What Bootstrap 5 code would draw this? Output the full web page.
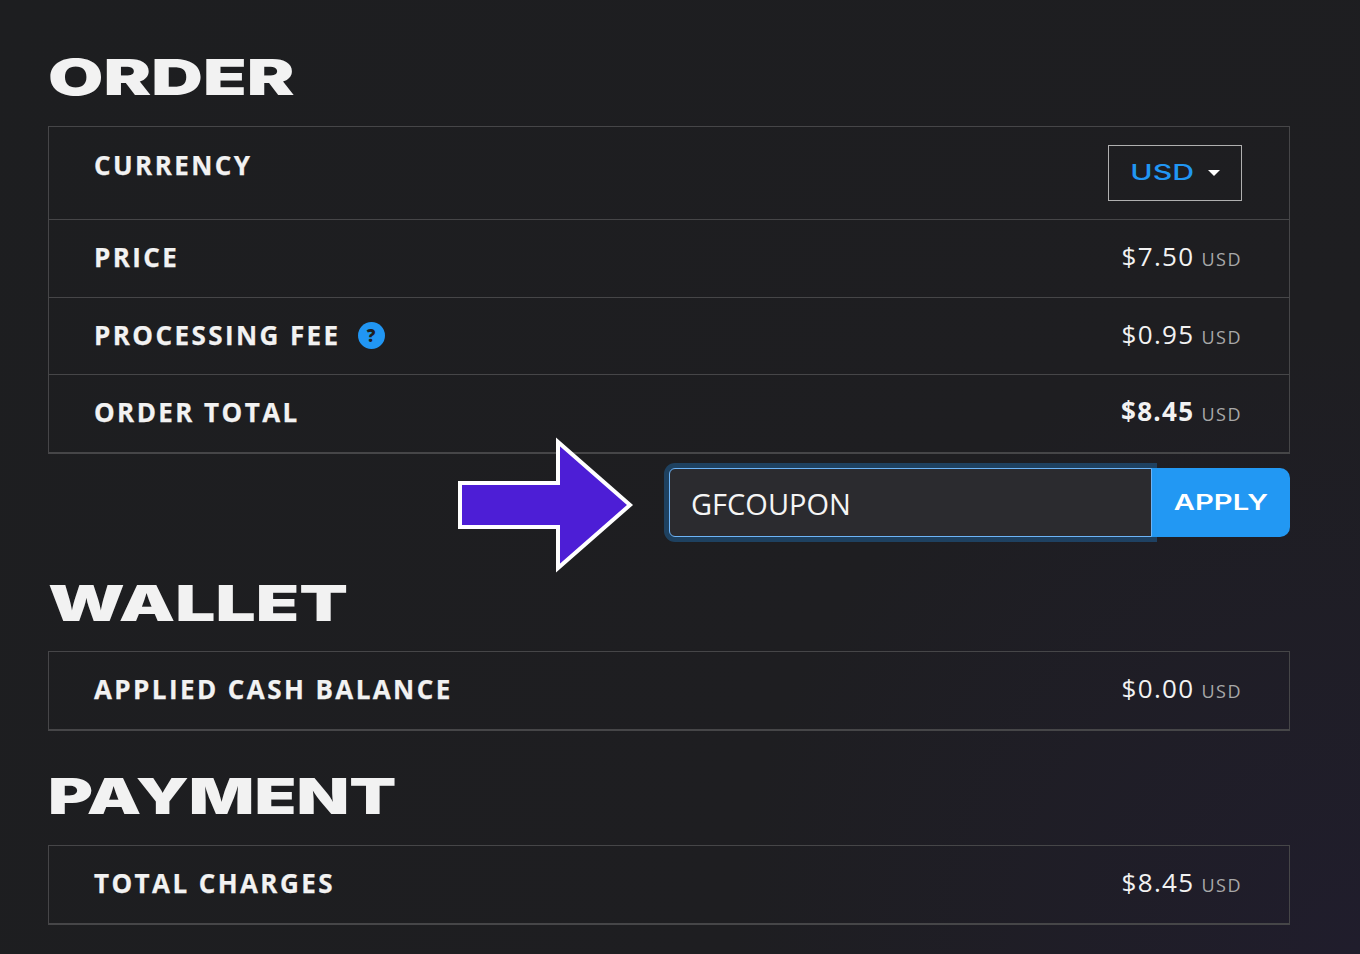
<!DOCTYPE html>
<html lang="en">
<head>
<meta charset="utf-8">
<title>Order</title>
<link href="https://cdn.jsdelivr.net/npm/bootstrap@5.3.0/dist/css/bootstrap.min.css" rel="stylesheet">
<style>
html,body{height:100%;}
body{background:radial-gradient(circle at 100% 100%,#201d2c 0,#1e1e21 38%,#1d1e20 100%);color:#f2f2f2;font-family:"Open Sans",sans-serif;overflow:hidden;}
.pagewrap{padding:0 70px 0 48px;}
.sect-title{font-family:Inter,sans-serif;font-weight:900;font-size:49px;line-height:52px;height:52px;width:fit-content;color:#f2f2f2;margin:0;transform-origin:0 50%;white-space:nowrap;}
.t-order{transform:scaleX(1.46);margin-top:52px;margin-bottom:22px;}
.t-wallet{transform:scaleX(1.45);margin-top:41px;margin-bottom:21px;}
.t-pay{transform:scaleX(1.40);margin-top:40px;margin-bottom:22px;}
.sumbox{border:1px solid #464648;border-bottom-width:2px;border-radius:0;background:transparent;}
.sumrow{background:transparent;border-color:#464648;padding:0 47px 0 45px;height:77px;color:#f2f2f2;}
.sumrow-top{height:93px;padding-top:23px;}
.sumrow-top + .sumrow{height:78px;}
.rowlabel{font-weight:700;font-size:26px;line-height:36px;letter-spacing:2.42px;-webkit-text-stroke:.25px #f2f2f2;margin-top:-3px;}
.rowval{font-size:26px;line-height:36px;letter-spacing:1.3px;color:#f2f2f2;margin-top:-2px;}
.unit{font-size:18px;letter-spacing:1.5px;color:#a8a8a8;margin-left:-1px;}
.cur-btn{width:134px;height:56px;border:1px solid #b0b0b0;border-radius:0;color:#2196f3;background:transparent;padding:0;margin-top:-5px;font-family:Inter,sans-serif;font-weight:500;font-size:21px;display:flex;align-items:center;justify-content:center;}
.cur-btn:hover{color:#2196f3;border-color:#b0b0b0;}
.cur-btn::after{color:#fff;margin-left:15px;vertical-align:middle;border-top-width:6px;border-left-width:6px;border-right-width:6px;}
.widetxt{display:inline-block;transform:scaleX(1.44);margin:0 8px 0 10px;}
.helpdot{width:27px;height:27px;border-radius:50%;background:#2196f3;color:#1e1e21;font-weight:800;font-size:17px;line-height:27px;text-align:center;margin-left:17px;margin-top:-1px;}
.couponline{position:relative;margin-top:14px;height:69px;}
.coupon-group{width:621px;height:69px;}
.coupon-input{background:#2b2b2f;color:#f5f5f5;border:1px solid #6db4f7;border-radius:6px 0 0 6px;font-size:29px;padding:2px 21px 0;box-shadow:0 0 0 5px rgba(33,150,243,.3);position:relative;z-index:5;font-family:"Open Sans",sans-serif;}
.coupon-btn{width:139px;background:#2298f3;border:0;color:#fff;border-radius:0 10px 10px 0;font-family:Inter,sans-serif;font-weight:600;font-size:21px;padding:0;}
.coupon-btn:hover{background:#2298f3;color:#fff;}
.applytxt{display:inline-block;transform:scaleX(1.39);}
.bigarrow{position:absolute;left:407px;top:-32px;width:180px;height:138px;}
</style>
</head>
<body>
<div class="pagewrap">
  <h2 class="sect-title t-order">ORDER</h2>
  <div class="list-group list-group-flush sumbox">
    <div class="list-group-item sumrow sumrow-top d-flex justify-content-between align-items-start">
      <span class="rowlabel">CURRENCY</span>
      <button class="btn cur-btn dropdown-toggle" type="button"><span class="widetxt">USD</span></button>
    </div>
    <div class="list-group-item sumrow d-flex justify-content-between align-items-center">
      <span class="rowlabel">PRICE</span>
      <span class="rowval">$7.50 <span class="unit">USD</span></span>
    </div>
    <div class="list-group-item sumrow d-flex justify-content-between align-items-center">
      <span class="d-flex align-items-center"><span class="rowlabel">PROCESSING FEE</span><span class="helpdot">?</span></span>
      <span class="rowval">$0.95 <span class="unit">USD</span></span>
    </div>
    <div class="list-group-item sumrow d-flex justify-content-between align-items-center">
      <span class="rowlabel">ORDER TOTAL</span>
      <span class="rowval"><b>$8.45</b> <span class="unit">USD</span></span>
    </div>
  </div>

  <div class="couponline d-flex justify-content-end">
    <svg class="bigarrow" viewBox="0 0 180 138" aria-hidden="true">
      <polygon points="5,47 103,47 103,6 175,69 103,132 103,91 5,91" fill="#4d1ed6" stroke="#fff" stroke-width="4"/>
    </svg>
    <div class="input-group coupon-group">
      <input class="form-control coupon-input" type="text" value="GFCOUPON">
      <button class="btn coupon-btn" type="button"><span class="applytxt">APPLY</span></button>
    </div>
  </div>

  <h2 class="sect-title t-wallet">WALLET</h2>
  <div class="list-group list-group-flush sumbox">
    <div class="list-group-item sumrow d-flex justify-content-between align-items-center">
      <span class="rowlabel">APPLIED CASH BALANCE</span>
      <span class="rowval">$0.00 <span class="unit">USD</span></span>
    </div>
  </div>

  <h2 class="sect-title t-pay">PAYMENT</h2>
  <div class="list-group list-group-flush sumbox">
    <div class="list-group-item sumrow d-flex justify-content-between align-items-center">
      <span class="rowlabel">TOTAL CHARGES</span>
      <span class="rowval">$8.45 <span class="unit">USD</span></span>
    </div>
  </div>
</div>
<script src="https://cdn.jsdelivr.net/npm/bootstrap@5.3.0/dist/js/bootstrap.bundle.min.js"></script>
</body>
</html>
